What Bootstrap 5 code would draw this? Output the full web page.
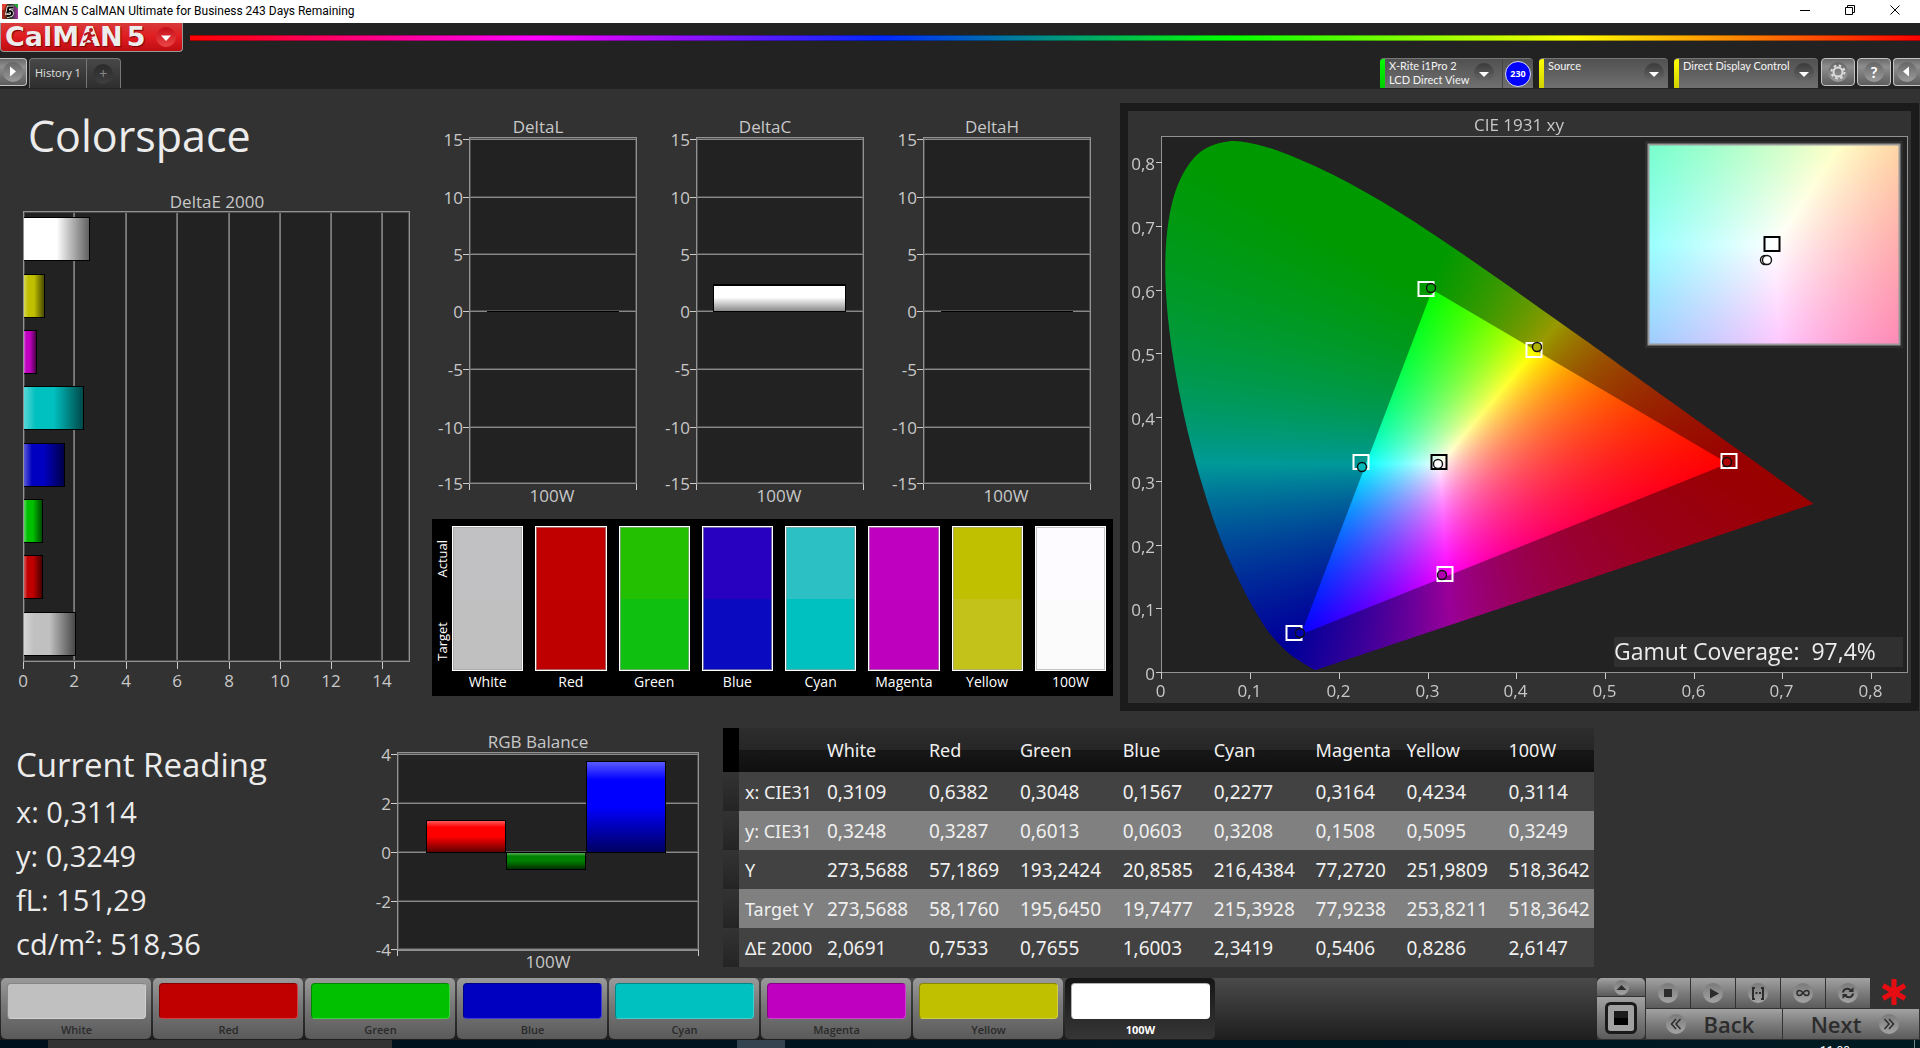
<!DOCTYPE html>
<html lang="en">
<head>
<meta charset="utf-8">
<meta name="viewport" content="width=device-width, initial-scale=1">
<title>CalMAN 5 CalMAN Ultimate for Business</title>
<link href="https://cdn.jsdelivr.net/npm/bootstrap@5.3.0/dist/css/bootstrap.min.css" rel="stylesheet">
<style>
  body { background: #323232; color: #ececec; font-family: "Open Sans", "Noto Sans", sans-serif; overflow-x: hidden; }
  button { font-family: inherit; }
  svg { display: block; }
  .win-title { height: 23px; background: #fff; color: #000; font: 12px/18px Roboto, sans-serif; }
  .win-title button { width: 46px; height: 18px; background: none; border: 0; padding: 0; color: #000; }
  .app-head { height: 66px; background: #222; padding-bottom: 1px; }
  .brand-btn { width: 183px; height: 29px; border: 1px solid #999; border-top: 0; border-radius: 0 0 4px 4px; background: linear-gradient(#d93a3a, #e01c20 50%, #bd0d12); padding: 0 6px 0 4px; }
  .brand-name { font: bold 27px/26px "DejaVu Sans", sans-serif; color: #ececec; text-shadow: 1px 1px 1px #700; }
  .runner { position: absolute; left: 80px; top: 4px; }
  .spectrum { height: 6px; margin: 12px 0 0 7px; border: 1px solid rgba(0,0,0,.35); border-width: 1px 0; background: linear-gradient(90deg, #f00, #f0f 20%, #0028ff 40%, #0f0 60%, #ff0 80%, #f00); }
  .orb { width: 20px; height: 20px; border-radius: 50%; background: linear-gradient(#3a3a3a, #6d6d6d); flex: none; }
  .orb-red { background: linear-gradient(#c50f19, #ec4545); }
  .orb-light { background: linear-gradient(#666, #9c9c9c); }
  .head-tools { gap: 2px; }
  .head-text { font: 11px/14px Lato, "Open Sans", sans-serif; }
  .tab-box { height: 30px; margin-left: 2px; border: 1px solid #777; border-bottom: 0; border-radius: 4px 4px 0 0; background: linear-gradient(#484848, #2e2e2e); padding: 0; }
  .tab-box button { background: none; border: 0; height: 29px; padding: 0 5px; color: #e0e0e0; font-size: 11px; }
  .tab-box button + button { border-left: 1px solid #777; width: 34px; color: #888; font-size: 14px; }
  .tab-box .orb { background: linear-gradient(#2b2b2b, #3e3e3e); line-height: 20px; }
  .sq-btn { width: 34px; height: 28px; border: 1px solid #c4c4c4; border-radius: 4px; background: linear-gradient(#6a6a6a, #8f8f8f 30%, #5c5c5c); padding: 0; color: #fff; }
  .sq-left { width: 27px; border-left: 0; border-radius: 0 4px 4px 0; }
  .sq-right { width: 27px; border-right: 0; border-radius: 4px 0 0 4px; }
  .dev-box { height: 30px; border: 0; border-top: 1px solid #777; border-radius: 4px 4px 0 0; background: linear-gradient(#515151, #707070); padding: 0; overflow: hidden; color: #f4f4f4; margin-right: 4px; white-space: nowrap; }
  .dev-box .strip { width: 5px; height: 30px; flex: none; background: linear-gradient(#ff0, #d0d000); }
  .dev-box .strip-ok { background: linear-gradient(#0f0, #0c0); }
  .meter { width: 153px; } .source { width: 129px; } .display { width: 144px; margin-right: 1px; }
  .count-cell { width: 31px; height: 30px; border-left: 1px solid #444; flex: none; }
  .count-dot { width: 26px; height: 26px; flex: none; border: 1px solid #dde; border-radius: 50%; background: #00f; color: #fff; font: bold 9px/24px "Open Sans", sans-serif; text-align: center; }
  .upper { display: grid; grid-template-columns: 432fr 688fr 800fr; }
  .lower { display: grid; grid-template-columns: 370fr 353fr 871fr 326fr; }
  h1 { font-size: 43px; line-height: 60px; font-weight: 400; margin: 17px 0 24px 28px; }
  .chart-svg { width: 100%; height: auto; }
  .chart-svg text { font-size: 17px; fill: #c8c8c8; }
  .deltas { display: grid; grid-template-columns: repeat(3, 1fr); margin: 26px 7px 8px 0; }
  .patches { background: #000; margin-right: 7px; height: 177px; padding: 7px 7px 0 0; }
  .patch-side { width: 20px; height: 145px; font-size: 13px; line-height: 18px; color: #fff; padding: 14px 0 10px; }
  .patch-side span { writing-mode: vertical-rl; transform: rotate(180deg); }
  .patch-list { gap: 12px; }
  .patch-cell { flex: 1 1 0; text-align: center; font-size: 14px; line-height: 22px; color: #fff; }
  .patch-pair { height: 145px; border: 1px solid #fff; outline: 1px solid rgba(160,160,160,.6); outline-offset: -2px; }
  .patch-pair div { height: 50%; }
  .cie { border: 8px solid #1b1b1b; margin: 14px 1px 0 0; display: grid; background: #323232; }
  .cie > * { grid-area: 1 / 1; width: 100%; height: auto; }
  .chart-svg .coverage { font-size: 23px; fill: #ececec; white-space: pre; }
  h2 { font-size: 33px; line-height: 46px; font-weight: 400; margin: 0 0 2px; }
  .reading { padding: 31px 0 0 16px; font-size: 29px; line-height: 44px; }
  .results { width: 100%; table-layout: fixed; margin-top: 17px; font-family: "Noto Sans", sans-serif; color: #f0f0f0; border-collapse: collapse; }
  .results th, .results td { padding: 1px 0 0; height: 39px; font-weight: 400; white-space: nowrap; line-height: 28px; }
  .results td { font-size: 19px; }
  .results th { font-size: 18px; padding-left: 6px; }
  .results thead th { height: 44px; padding: 0; background: linear-gradient(#2d2d2d, #262626 49%, #171717 50%, #0f0f0f); }
  .results thead .gutter { background: #000; }
  .results tbody tr { background: #424242; }
  .results tbody tr:nth-child(even) { background: #808080; }
  .results tbody .gutter { background: linear-gradient(#333, #242424); }
  .foot { height: 62px; background: linear-gradient(#4a4a4a, #1e1e1e); }
  .pick { width: 150px; height: 61px; border: 0; border-radius: 5px; background: linear-gradient(#9a9a9a, #787878 45%, #5a5a5a); padding: 5px 5px 0 6px; font-size: 11px; line-height: 22px; font-weight: 600; color: #2a2a2a; margin: 0 1px; }
  .pick i { display: block; height: 36px; border-radius: 4px; border: 1px solid rgba(0,0,0,.3); border-right-color: rgba(255,255,255,.25); border-bottom-color: rgba(255,255,255,.25); }
  .pick.current { background: linear-gradient(#161616, #363636); color: #fff; font-weight: 700; }
  .controls { background: #323232; width: 323px; height: 62px; gap: 1px; }
  .ctl-group, .ctl-line { gap: 1px; }
  .ctl { border: 0; background: linear-gradient(#a2a2a2, #7c7c7c 50%, #5b5b5b); padding: 0; color: #2c2c2c; }
  .ctl .orb { background: linear-gradient(#7a7a7a, #a4a4a4); }
  .ctl-up { width: 48px; height: 18px; border-radius: 5px 5px 0 0; }
  .ctl-up .orb { width: 15px; height: 15px; }
  .ctl-stop { width: 48px; height: 42px; border-radius: 0 0 5px 5px; }
  .ctl-small { width: 44px; height: 30px; }
  .ctl-wide { width: 136px; height: 30px; font-size: 22px; line-height: 28px; font-weight: 600; gap: 18px; }
  .os-bar { height: 8px; overflow: hidden; background: linear-gradient(90deg, #00101c, #001a22); display: grid; grid-template-columns: 48fr 344fr 345fr 48fr 1035fr 94fr 6fr; }
  .os-bar .on { background: #323232; } .os-bar .hot { background: #34434f; }
  .os-bar .clock { font: 12px/14px Roboto, sans-serif; color: #fff; padding-top: 4px; height: 20px; }
  .os-bar .peek { border-left: 1px solid #788; }
</style>
</head>
<body>
<div class="d-flex flex-column min-vh-100">

  <div class="win-title d-flex align-items-start">
    <svg class="mt-1 ms-0" width="20" height="16" viewBox="0 0 20 16"><defs><linearGradient id="ico"><stop offset="0" stop-color="#b22"/><stop offset=".5" stop-color="#131"/><stop offset="1" stop-color="#a3a"/></linearGradient></defs><rect x="2" y="0" width="16" height="15" fill="url(#ico)"/><path d="M2 0h5l-3 6H2z" fill="#d43"/><path d="M13 0h5v5z" fill="#2a3"/><path d="M13.500 3.500H8.500L7.500 8q4-2 4.500 1t-5 3" fill="none" stroke="#fff" stroke-width="3.500"/><path d="M13.500 3.500H8.500L7.500 8q4-2 4.500 1t-5 3" fill="none" stroke="#000" stroke-width="2"/></svg>
    <span class="flex-grow-1 ps-1 pt-1 lh-sm">CalMAN 5 CalMAN Ultimate for Business 243 Days Remaining</span>
    <button type="button" aria-label="Minimize"><svg width="46" height="20" stroke="#000"><path d="M18 10.500h10"/></svg></button>
    <button type="button" aria-label="Restore"><svg width="46" height="20" fill="none" stroke="#000"><path d="M17.500 7.500h7v7h-7zM19.500 7v-1.500h7v7H25"/></svg></button>
    <button type="button" aria-label="Close"><svg width="46" height="20" stroke="#000"><path d="M16.500 5.500l9 9m0-9l-9 9"/></svg></button>
  </div>

  <header class="app-head d-flex flex-column justify-content-between">
    <div class="d-flex align-items-start">
      <button class="brand-btn d-flex align-items-center justify-content-between position-relative" type="button" aria-label="CalMAN menu">
        <span class="brand-name d-flex"><span>CalMAN</span><span class="ps-1">5</span></span>
        <svg class="runner" width="18" height="18" fill="none" stroke="#b5161b" stroke-width="2"><circle cx="10" cy="3" r="1"/><path d="M9 5L7 11l4 3-1 3M7 11l-2 3-3 1M3 8l4-2 4 3 3-1"/></svg>
        <span class="orb orb-red"><svg width="20" height="20"><path d="M5 8.500h10L10 14z" fill="#fff"/></svg></span>
      </button>
      <div class="spectrum flex-grow-1"></div>
    </div>
    <div class="d-flex align-items-start">
      <button class="sq-btn sq-left d-flex align-items-center justify-content-center" type="button" aria-label="Show panel"><span class="orb orb-light"><svg width="20" height="20"><path d="M7 4.500v10l6-5z" fill="#fff"/></svg></span></button>
      <div class="tab-box d-flex">
        <button type="button">History 1</button>
        <button type="button" class="d-flex align-items-center justify-content-center" aria-label="Add tab"><span class="orb">+</span></button>
      </div>
      <div class="ms-auto d-flex align-items-start head-text head-tools">
        <button type="button" class="dev-box meter d-flex align-items-start text-start">
          <span class="strip strip-ok"></span><span class="flex-grow-1 ps-1">X-Rite i1Pro 2<br>LCD Direct View</span>
          <span class="orb mt-1 me-2"><svg width="20" height="20"><path d="M5 9h10l-5 5z" fill="#fff"/></svg></span>
          <span class="count-cell d-flex align-items-center justify-content-center"><span class="count-dot">230</span></span>
        </button>
        <button type="button" class="dev-box source d-flex align-items-start text-start">
          <span class="strip"></span><span class="flex-grow-1 ps-1">Source</span>
          <span class="orb mt-1 me-1"><svg width="20" height="20"><path d="M5 9h10l-5 5z" fill="#fff"/></svg></span>
        </button>
        <button type="button" class="dev-box display d-flex align-items-start text-start">
          <span class="strip"></span><span class="flex-grow-1 ps-1">Direct Display Control</span>
          <span class="orb mt-1 me-1"><svg width="20" height="20"><path d="M5 9h10l-5 5z" fill="#fff"/></svg></span>
        </button>
        <button class="sq-btn d-flex align-items-center justify-content-center" type="button" aria-label="Settings"><span class="orb orb-light"><svg width="20" height="20" fill="none" stroke="#ddd"><circle cx="10" cy="10" r="4.500" stroke-width="2"/><circle cx="10" cy="10" r="6.500" stroke-width="2" stroke-dasharray="2.500 2.600"/></svg></span></button>
        <button class="sq-btn d-flex align-items-center justify-content-center" type="button" aria-label="Help"><span class="orb orb-light fw-bold fs-6 lh-sm">?</span></button>
        <button class="sq-btn sq-right d-flex align-items-center justify-content-center" type="button" aria-label="Collapse"><span class="orb orb-light"><svg width="20" height="20"><path d="M12 4.500v10l-6-5z" fill="#fff"/></svg></span></button>
      </div>
    </div>
  </header>

  <main class="flex-grow-1">
    <div class="upper">
      <section>
        <h1>Colorspace</h1>
        <svg class="chart-svg" id="deltaE" viewBox="0 190 432 505"></svg>
      </section>
      <section>
        <div class="deltas" id="deltas"></div>
        <div class="patches d-flex">
          <div class="patch-side d-flex flex-column justify-content-between align-items-center"><span>Actual</span><span>Target</span></div>
          <div class="patch-list d-flex flex-grow-1" id="patches"></div>
        </div>
      </section>
      <section class="cie">
        <canvas id="gamut" width="783" height="592"></canvas>
        <svg class="chart-svg" id="cieAxes" viewBox="1128 111 783 592"></svg>
      </section>
    </div>

    <div class="lower">
      <section class="reading">
        <h2>Current Reading</h2>
        <div>x: 0,3114</div>
        <div>y: 0,3249</div>
        <div>fL: 151,29</div>
        <div>cd/m²: 518,36</div>
      </section>
      <section>
        <svg class="chart-svg" id="balance" viewBox="370 711 353 262"></svg>
      </section>
      <section>
        <table class="results">
          <colgroup><col style="width:1.840%"><col style="width:10.100%"><col style="width:11.700%"><col style="width:10.450%"><col style="width:11.800%"><col style="width:10.450%"><col style="width:11.700%"><col style="width:10.450%"><col style="width:11.700%"><col></colgroup>
          <thead><tr><th class="gutter"></th><th></th><th scope="col">White</th><th scope="col">Red</th><th scope="col">Green</th><th scope="col">Blue</th><th scope="col">Cyan</th><th scope="col">Magenta</th><th scope="col">Yellow</th><th scope="col">100W</th></tr></thead>
          <tbody>
            <tr><td class="gutter"></td><th scope="row">x: CIE31</th><td>0,3109</td><td>0,6382</td><td>0,3048</td><td>0,1567</td><td>0,2277</td><td>0,3164</td><td>0,4234</td><td>0,3114</td></tr>
            <tr><td class="gutter"></td><th scope="row">y: CIE31</th><td>0,3248</td><td>0,3287</td><td>0,6013</td><td>0,0603</td><td>0,3208</td><td>0,1508</td><td>0,5095</td><td>0,3249</td></tr>
            <tr><td class="gutter"></td><th scope="row">Y</th><td>273,5688</td><td>57,1869</td><td>193,2424</td><td>20,8585</td><td>216,4384</td><td>77,2720</td><td>251,9809</td><td>518,3642</td></tr>
            <tr><td class="gutter"></td><th scope="row">Target Y</th><td>273,5688</td><td>58,1760</td><td>195,6450</td><td>19,7477</td><td>215,3928</td><td>77,9238</td><td>253,8211</td><td>518,3642</td></tr>
            <tr><td class="gutter"></td><th scope="row">ΔE 2000</th><td>2,0691</td><td>0,7533</td><td>0,7655</td><td>1,6003</td><td>2,3419</td><td>0,5406</td><td>0,8286</td><td>2,6147</td></tr>
          </tbody>
        </table>
      </section>
    </div>
  </main>

  <footer class="foot d-flex align-items-start">
    <div class="d-flex" id="picks"></div>
    <div class="controls ms-auto d-flex">
      <div class="ctl-group d-flex flex-column">
        <button class="ctl ctl-up d-flex align-items-center justify-content-center" type="button" aria-label="More"><span class="orb"><svg width="15" height="15"><path d="M2.500 10h10l-5-5z" fill="#2c2c2c"/></svg></span></button>
        <button class="ctl ctl-stop d-flex align-items-center justify-content-center" type="button" aria-label="Pattern window"><svg width="32" height="32"><rect x="1.500" y="1.500" width="29" height="29" rx="4" fill="#a0a0a0" stroke="#1a1a1a" stroke-width="3"/><path d="M9 9h14v14H9z"/><path d="M9 9h14v7H9z" fill="#1b1b1b"/></svg></button>
      </div>
      <div class="ctl-group d-flex flex-column">
        <div class="ctl-line d-flex align-items-center">
          <button class="ctl ctl-small d-flex align-items-center justify-content-center" type="button" aria-label="Stop"><span class="orb"><svg width="20" height="20"><path d="M6 6h8v8H6z" fill="#2c2c2c"/></svg></span></button>
          <button class="ctl ctl-small d-flex align-items-center justify-content-center" type="button" aria-label="Play"><span class="orb"><svg width="20" height="20"><path d="M7 5.500v10l9-5z" fill="#2c2c2c"/></svg></span></button>
          <button class="ctl ctl-small d-flex align-items-center justify-content-center" type="button" aria-label="Read series"><span class="orb"><svg width="20" height="20" fill="none" stroke="#2c2c2c" stroke-width="2"><path d="M7 5H5v11h2M13 5h2v11h-2M7.500 10h2M11 10h2"/></svg></span></button>
          <button class="ctl ctl-small d-flex align-items-center justify-content-center" type="button" aria-label="Continuous"><span class="orb"><svg width="20" height="20" fill="none" stroke="#2c2c2c" stroke-width="1.500"><path d="M10 10c-2-3-6-3.500-6 0s4 3 6 0 6-3.500 6 0-4 3-6 0"/></svg></span></button>
          <button class="ctl ctl-small d-flex align-items-center justify-content-center" type="button" aria-label="Refresh"><span class="orb"><svg width="20" height="20" fill="none" stroke="#2c2c2c" stroke-width="2"><path d="M5 9.500c.5-4 5-5 8-2M15 10.500c-.5 4-5 5-8 2"/><path d="M15.500 4v5h-5zM4.500 16v-5h5z" fill="#2c2c2c" stroke="none"/></svg></span></button>
          <svg width="46" height="30" viewBox="0 0 46 30" stroke="#e60d12" stroke-width="5"><path d="M23 1v26M12 7.500l22 13M34 7.500l-22 13"/></svg>
        </div>
        <div class="ctl-line d-flex">
          <button class="ctl ctl-wide d-flex align-items-center justify-content-center pe-2" type="button"><span class="orb"><svg width="20" height="20" fill="none" stroke="#2c2c2c" stroke-width="1.500"><path d="M10 5l-4.500 5 4.500 5M14.500 5L10 10l4.500 5"/></svg></span>Back</button>
          <button class="ctl ctl-wide d-flex align-items-center justify-content-center ps-2" type="button">Next<span class="orb"><svg width="20" height="20" fill="none" stroke="#2c2c2c" stroke-width="1.500"><path d="M10 5l4.500 5-4.500 5M5.500 5l4.500 5-4.500 5"/></svg></span></button>
        </div>
      </div>
    </div>
  </footer>

  <div class="os-bar"><span></span><span class="on"></span><span></span><span class="hot"></span><span></span><span class="clock">11:00</span><span class="peek"></span></div>
</div>

<script>
const el = id => document.getElementById(id);
const line = (x1, y1, x2, y2, c, w) => `<path d="M${x1} ${y1}L${x2} ${y2}" stroke="${c}" stroke-width="${w || 1}" shape-rendering="crispEdges" fill="none"/>`;
const rect = (x, y, w, h, f, s, sw) => `<rect x="${x}" y="${y}" width="${w}" height="${h}" fill="${f}" stroke="${s || 'none'}" stroke-width="${sw || 1}"/>`;
const label = (x, y, t, a) => `<text x="${x}" y="${y}" text-anchor="${a || 'middle'}">${t}</text>`;
const frame = (x, y, w, h) => rect(x + .5, y + .5, w - 1, h - 1, '#222', '#929292') + rect(x + 1.5, y + 1.5, w - 3, h - 3, 'none', '#4c4c4c');
const hGrid = (x1, x2, y) => line(x1, y - .5, x2, y - .5, '#505050') + line(x1, y + .5, x2, y + .5, '#888');
const vGrid = (x, y1, y2) => line(x - .5, y1, x - .5, y2, '#6a6a6a') + line(x + .5, y1, x + .5, y2, '#7c7c7c');

const shade = (id, dir) => `<linearGradient id="${id}" ${dir}><stop offset="0" stop-color="#fff" stop-opacity=".35"/><stop offset=".2" stop-color="#fff" stop-opacity="0"/><stop offset=".5" stop-opacity="0"/><stop offset="1" stop-opacity=".62"/></linearGradient>`;

/* DeltaE 2000 */
{
  let s = '<defs>' + shade('sh', '') + '</defs>' + label(217, 208, 'DeltaE 2000') + frame(23, 211, 387, 451);
  [23, 74, 126, 177, 229, 280, 331, 382].forEach((x, i) => {
    if (i) s += vGrid(x, 213, 660);
    s += line(x + .5, 662, x + .5, 669, '#ccc', 1) + label(x, 687, i * 2);
  });
  [[217, 90, '#fff'], [274, 45, '#c0c000'], [330, 37, '#c000c0'], [386, 84, '#00c0c0'], [443, 65, '#0000c0'], [499, 43, '#00c000'], [555, 43, '#c00000'], [612, 76, '#c0c0c0']].forEach(([y, r, c]) => {
    s += rect(24, y, r - 24, 44, '#000') + rect(24, y + 1, r - 25, 42, c) + rect(24, y + 1, r - 25, 42, 'url(#sh)');
  });
  s += line(23.5, 211, 23.5, 662, '#929292');
  el('deltaE').innerHTML = s;
}

/* DeltaL, DeltaC, DeltaH */
el('deltas').innerHTML = [['DeltaL', 0], ['DeltaC', 27], ['DeltaH', 0]].map(([name, h], n) => {
  let s = `<defs><linearGradient id="w${n}" x2="0" y2="1"><stop offset=".45" stop-color="#fff"/><stop offset="1" stop-color="#8a8a8a"/></linearGradient></defs>`;
  s += label(538, 133, name) + frame(469, 137, 168, 347);
  [139, 197, 254, 311, 369, 427, 483].forEach((y, i) => {
    s += hGrid(470, 636, y) + line(463, y + .5, 469, y + .5, '#ccc') + label(463, y + 7, 15 - 5 * i, 'end');
  });
  s += line(469.5, 484, 469.5, 490, '#ccc') + line(636.5, 484, 636.5, 490, '#ccc') + label(552, 502, '100W');
  s += h ? rect(713 - 227, 284, 133, h + 1, '#000') + rect(714 - 227, 286, 131, h - 2, `url(#w${n})`) : line(487, 311.5, 619, 311.5, '#000');
  return `<svg class="chart-svg" viewBox="432 115 227 396">${s}</svg>`;
}).join('');

/* actual over target */
el('patches').innerHTML = [['White', '#c1c1c3', '#c0c0c0'], ['Red', '#c00000', '#be0000'], ['Green', '#22c000', '#10c010'], ['Blue', '#2800c0', '#0a0ac0'], ['Cyan', '#2cc0c4', '#00c0c0'], ['Magenta', '#c000c0', '#be00be'], ['Yellow', '#c0c000', '#c2c21a'], ['100W', '#fdfbff', '#fbfbfb']]
  .map(([n, a, t]) => `<div class="patch-cell"><div class="patch-pair"><div style="background:${a}"></div><div style="background:${t}"></div></div>${n}</div>`).join('');

/* RGB balance */
{
  let s = '<defs>' + shade('sv', 'x2="0" y2="1"') + '</defs>' + label(538, 748, 'RGB Balance') + frame(397, 752, 302, 199);
  [754, 803, 852, 901, 949].forEach((y, i) => {
    s += hGrid(398, 698, y) + line(391, y + .5, 397, y + .5, '#ccc') + label(391, y + 7, 4 - 2 * i, 'end');
  });
  s += line(397.5, 950, 397.5, 956, '#ccc') + line(698.5, 950, 698.5, 956, '#ccc') + label(548, 968, '100W');
  [[426, 820, 80, 33, '#f00'], [506, 852, 80, 18, '#008000'], [586, 761, 80, 92, '#00f']].forEach(([x, y, w, h, c]) => {
    s += rect(x, y, w, h, '#000') + rect(x + 1, y + 1, w - 2, h - 2, c) + rect(x + 1, y + 1, w - 2, h - 2, 'url(#sv)');
  });
  el('balance').innerHTML = s;
}

/* chromaticity: x = 1162 + 887 * cx, y = 673 - 637.5 * cy */
const px = x => 1162 + 887 * x, py = y => 673 - 637.5 * y;
{
  const cv = el('gamut'), W = 783, H = 592, X0 = 1128, Y0 = 111, g = cv.getContext('2d');
  const rgb = (x, y) => {
    const X = x / y, Z = (1 - x - y) / y;
    const c = [3.2406 * X - 1.5372 - .4986 * Z, -.9689 * X + 1.8758 + .0415 * Z, .0557 * X - .2040 + 1.0570 * Z].map(v => Math.max(0, v));
    const m = Math.max(...c) || 1;
    return c.map(v => 255 * v / m);
  };
  const layer = (w, h, fx, fy, k) => {
    const c = document.createElement('canvas'); c.width = w; c.height = h;
    const q = c.getContext('2d'), im = q.createImageData(w, h);
    for (let j = 0; j < h; j++) for (let i = 0; i < w; i++) {
      const v = rgb(fx(i), Math.max(.001, fy(j))), o = 4 * (j * w + i);
      im.data[o] = v[0] * k; im.data[o + 1] = v[1] * k; im.data[o + 2] = v[2] * k; im.data[o + 3] = 255;
    }
    q.putImageData(im, 0, 0); return c;
  };
  const fx = i => (i + X0 - 1162) / 887, fy = j => (673 - j - Y0) / 637.5;
  const locus = [[.1741,.005],[.1714,.0051],[.1644,.0109],[.1566,.0177],[.144,.0297],[.1241,.0578],[.1096,.0868],[.0913,.1327],[.0687,.2007],[.0454,.295],[.0235,.4127],[.0082,.5384],[.0039,.6548],[.0139,.7502],[.0389,.812],[.0743,.8338],[.1142,.8262],[.1547,.8059],[.1929,.7816],[.2296,.7543],[.2658,.7243],[.3016,.6923],[.3373,.6589],[.3731,.6245],[.4087,.5896],[.4441,.5547],[.4788,.5202],[.5125,.4866],[.5752,.4242],[.627,.3725],[.6658,.334],[.6915,.3083],[.719,.2809],[.7347,.2653]]
    .map(([x, y]) => [px(x) - X0, py(y) - Y0]);
  g.fillStyle = '#222'; g.fillRect(34, 26, 745, 536);
  /* Catmull-Rom through the spectral locus, closed by the purple line */
  g.save(); g.beginPath(); g.moveTo(...locus[0]);
  for (let i = 0; i < locus.length - 1; i++) {
    const a = locus[Math.max(0, i - 1)], b = locus[i], c = locus[i + 1], d = locus[Math.min(locus.length - 1, i + 2)];
    g.bezierCurveTo(b[0] + (c[0] - a[0]) / 6, b[1] + (c[1] - a[1]) / 6, c[0] - (d[0] - b[0]) / 6, c[1] - (d[1] - b[1]) / 6, c[0], c[1]);
  }
  g.closePath(); g.clip(); g.drawImage(layer(W, H, fx, fy, .6), 0, 0); g.restore();
  g.save(); g.beginPath();
  [[.6382, .3287], [.3048, .6013], [.1567, .0603]].forEach(([x, y]) => g.lineTo(px(x) - X0, py(y) - Y0));
  g.closePath(); g.clip(); g.drawImage(layer(W, H, fx, fy, 1), 0, 0); g.restore();
  /* white point close-up */
  g.fillStyle = '#2e2e2e'; g.fillRect(517, 30, 258, 207);
  g.drawImage(layer(250, 199, i => .3127 + (i - 125) / 4200, j => .329 - (j - 100) / 3900, 1), 521, 34);

  let s = label(1519, 131, 'CIE 1931 xy') + rect(1161.5, 136.5, 746, 536, 'none', '#929292') + rect(1648.5, 144.5, 251, 200, 'none', '#999', 2);
  for (let i = 0; i < 9; i++) {
    const t = i ? '0,' + i : '0', x = Math.round(1161.4 + 88.7 * i) + .5, y = Math.round(673 - 63.75 * i) - .5;
    s += line(x, 673, x, 679, '#ccc') + label(x - 1, 697, t) + line(1156, y, 1162, y, '#ccc') + label(1155, y + 7, t, 'end');
  }
  [[1729, 461], [1426, 289], [1294, 633], [1361, 462], [1445, 574], [1534, 350], [1439, 462, 1], [1772, 244, 1]].forEach(([x, y, k]) => {
    s += rect(x - 7.5, y - 7, 15, 14, 'none', k ? '#000' : '#fff', 2);
  });
  [[1431, 288, '#00a000'], [1537, 347, '#b0b000'], [1362, 467, '#00b8b8'], [1438, 464, '#fff'], [1727, 462, '#b00000'], [1442, 575, '#b000b0'], [1300, 633, '#0000b0'], [1765, 260, '#fff'], [1767, 260, '#fff']].forEach(([x, y, c]) => {
    s += `<circle cx="${x}" cy="${y}" r="4.500" fill="${c}" stroke="#111" stroke-width="1.400"/>`;
  });
  s += rect(1614, 637, 289, 30, '#303030') + '<text class="coverage" x="1614" y="660">Gamut Coverage:  97,4%</text>';
  el('cieAxes').innerHTML = s;
}

/* pattern picker */
el('picks').innerHTML = [['White', '#c0c0c0'], ['Red', '#c00000'], ['Green', '#00c000'], ['Blue', '#0000c0'], ['Cyan', '#00c0c0'], ['Magenta', '#c000c0'], ['Yellow', '#c0c000'], ['100W', '#fff']]
  .map(([n, c], i) => `<button type="button" class="pick${i == 7 ? ' current' : ''}"><i style="background:${c}"></i>${n}</button>`).join('');
</script>
<script src="https://cdn.jsdelivr.net/npm/bootstrap@5.3.0/dist/js/bootstrap.bundle.min.js"></script>
</body>
</html>
